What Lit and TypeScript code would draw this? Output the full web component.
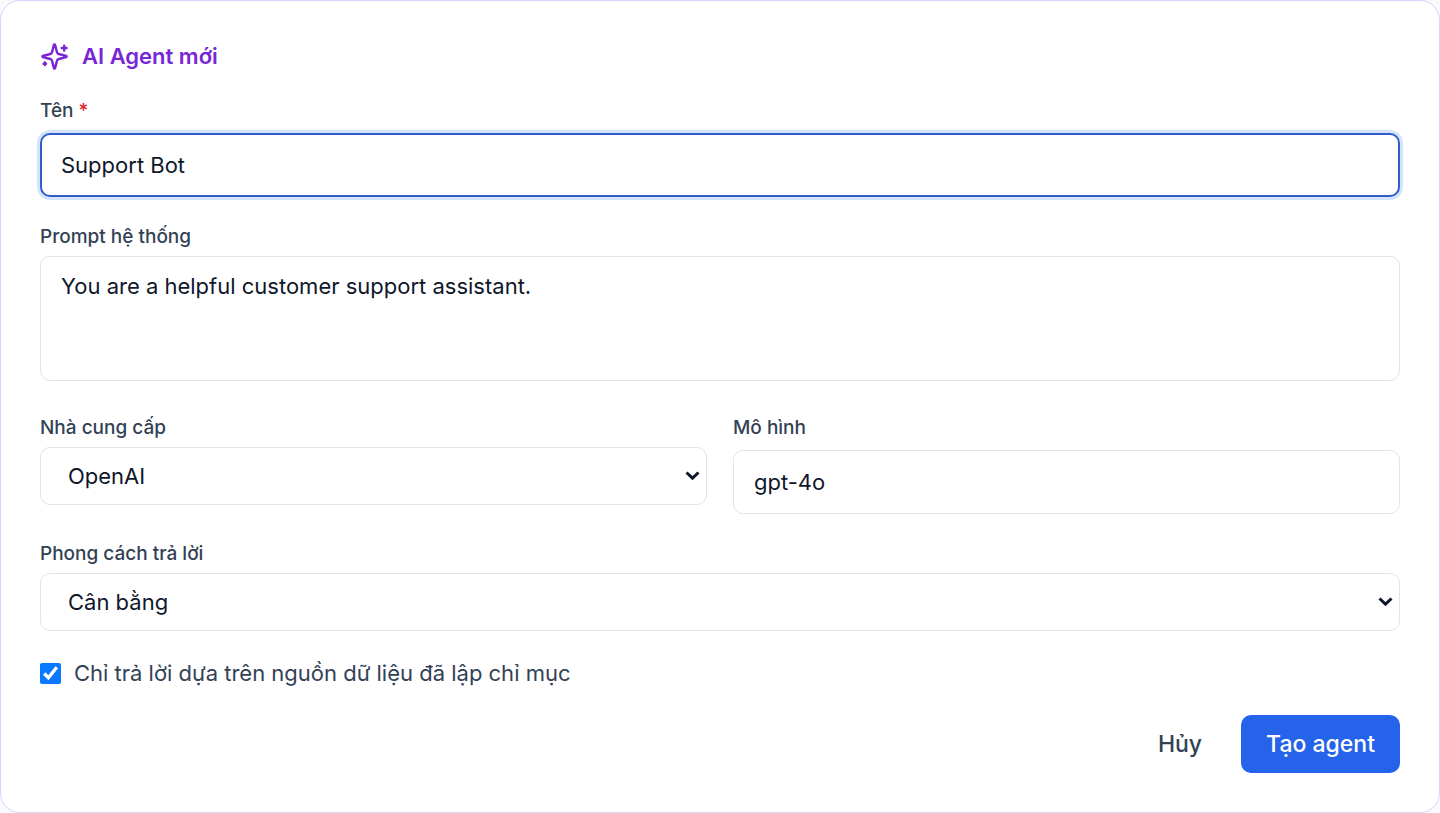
import { LitElement, html, css } from "lit";
import { customElement, state } from "lit/decorators.js";

const chevron = html`<svg class="chevron" viewBox="0 0 16 10" aria-hidden="true">
  <path d="M1.5 1.5l6 5.6 6-5.6" />
</svg>`;

@customElement("app-root")
export class AppRoot extends LitElement {
  @state() private indexedOnly = true;

  static styles = css`
    :host {
      display: block;
      min-height: 100vh;
      background: #faf9fb;
      font-family: Inter, "Noto Sans", sans-serif;
      font-size: 22px;
      line-height: 34px;
      color: #0f172a;
    }
    * {
      box-sizing: border-box;
    }
    .card {
      display: flex;
      flex-direction: column;
      gap: 25px;
      min-height: 100vh;
      padding: 39px;
      background: #fff;
      border: 1px solid #d9d3fb;
      border-radius: 20px;
    }
    .title {
      display: flex;
      align-items: center;
      gap: 13px;
      margin: 0;
      padding-top: 2px;
      font-size: 22px;
      font-weight: 600;
      line-height: 29px;
      color: #7826d8;
    }
    .sparkles {
      width: 29px;
      height: 29px;
      fill: none;
      stroke: currentColor;
      stroke-width: 2;
      stroke-linecap: round;
      stroke-linejoin: round;
    }
    .field {
      display: flex;
      flex-direction: column;
      gap: 5px;
      min-width: 0;
    }
    .field.text {
      gap: 8px;
    }
    .field.area {
      padding-bottom: 7px;
    }
    .label {
      font-size: 19px;
      font-weight: 500;
      line-height: 29px;
      color: #334155;
    }
    .required {
      color: #dc2626;
    }
    .control {
      display: block;
      width: 100%;
      margin: 0;
      padding: 0 20px;
      font: inherit;
      color: inherit;
      background: #fff;
      border: 1px solid #e2e4ea;
      border-radius: 10px;
      outline: none;
    }
    .input {
      height: 64px;
    }
    .input.active {
      border: 2px solid #2f5fc4;
      padding: 0 19px;
      box-shadow: 0 0 0 3px #d3e4fb;
    }
    .textarea {
      height: 125px;
      padding: 12px 20px;
      resize: none;
    }
    .pair {
      display: grid;
      grid-template-columns: 1fr 1fr;
      gap: 26px;
      align-items: start;
    }
    .picker {
      display: grid;
      align-items: center;
    }
    .picker > * {
      grid-area: 1 / 1;
    }
    .select {
      height: 58px;
      padding: 0 40px 0 27px;
      appearance: none;
    }
    .chevron {
      justify-self: end;
      width: 16px;
      height: 10px;
      margin-right: 6px;
      fill: none;
      stroke: #0f172a;
      stroke-width: 3;
      pointer-events: none;
    }
    .check {
      display: flex;
      align-items: center;
      gap: 13px;
      color: #334155;
    }
    .checkbox {
      width: 21px;
      height: 21px;
      margin: 0;
      accent-color: #0a78ff;
    }
    .actions {
      display: flex;
      justify-content: flex-end;
      gap: 14px;
    }
    .button {
      height: 58px;
      padding: 0 25px;
      font: inherit;
      font-size: 23px;
      font-weight: 500;
      color: #334155;
      background: none;
      border: 0;
      border-radius: 10px;
      cursor: pointer;
    }
    .button.primary {
      color: #fff;
      background: #2563eb;
    }
  `;

  private onToggle(e: Event) {
    this.indexedOnly = (e.target as HTMLInputElement).checked;
  }

  render() {
    return html`
      <form class="card" @submit=${(e: Event) => e.preventDefault()}>
        <h2 class="title">
          <svg class="sparkles" viewBox="0 0 24 24" aria-hidden="true">
            <path
              d="M9.937 15.5A2 2 0 0 0 8.5 14.063l-6.135-1.582a.5.5 0 0 1 0-.962L8.5 9.936A2 2 0 0 0 9.937 8.5l1.582-6.135a.5.5 0 0 1 .963 0L14.063 8.5A2 2 0 0 0 15.5 9.937l6.135 1.581a.5.5 0 0 1 0 .964L15.5 14.063a2 2 0 0 0-1.437 1.437l-1.582 6.135a.5.5 0 0 1-.963 0z"
            />
            <path d="M20 3v4M22 5h-4M4 17v2M5 18H3" />
          </svg>
          AI Agent mới
        </h2>
        <div class="field text">
          <label class="label" for="name">Tên <span class="required">*</span></label>
          <input class="control input active" id="name" type="text" .value=${"Support Bot"} required />
        </div>
        <div class="field area">
          <label class="label" for="prompt">Prompt hệ thống</label>
          <textarea
            class="control textarea"
            id="prompt"
            .value=${"You are a helpful customer support assistant."}
          ></textarea>
        </div>
        <div class="pair">
          <div class="field">
            <label class="label" for="provider">Nhà cung cấp</label>
            <div class="picker">
              <select class="control select" id="provider">
                <option>OpenAI</option>
              </select>
              ${chevron}
            </div>
          </div>
          <div class="field text">
            <label class="label" for="model">Mô hình</label>
            <input class="control input" id="model" type="text" .value=${"gpt-4o"} />
          </div>
        </div>
        <div class="field">
          <label class="label" for="style">Phong cách trả lời</label>
          <div class="picker">
            <select class="control select" id="style">
              <option>Cân bằng</option>
            </select>
            ${chevron}
          </div>
        </div>
        <label class="check">
          <input class="checkbox" type="checkbox" .checked=${this.indexedOnly} @change=${this.onToggle} />
          Chỉ trả lời dựa trên nguồn dữ liệu đã lập chỉ mục
        </label>
        <div class="actions">
          <button class="button" type="button">Hủy</button>
          <button class="button primary" type="submit">Tạo agent</button>
        </div>
      </form>
    `;
  }
}
